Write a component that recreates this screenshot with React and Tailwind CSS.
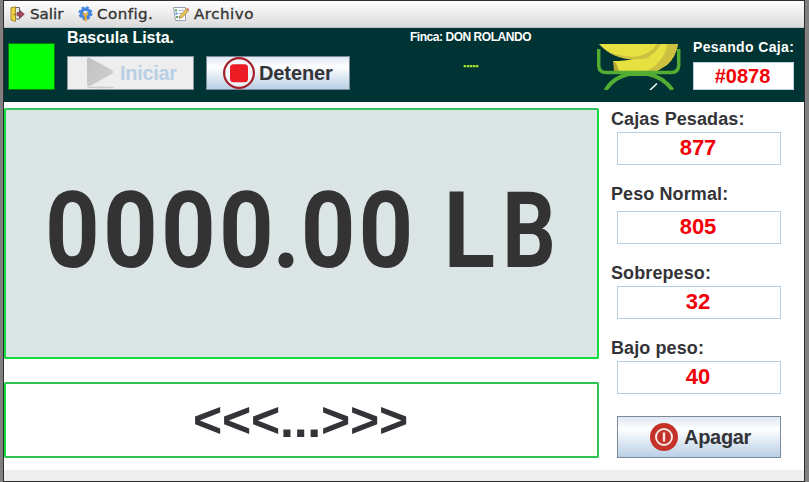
import React from 'react';

const fontSans = "font-['Liberation_Sans',Arial,sans-serif]";

function DoorIcon() {
  return (
    <svg width="16" height="18" viewBox="0 0 16 18" className="block shrink-0">
      <path d="M5 2.5H9.5V14H5z" fill="#e9e4e0" stroke="#666" />
      <path d="M1 2.5L5.5 1.8V16.5L1 15z" fill="#f0cf45" stroke="#94751b" strokeWidth=".8" />
      <circle cx="4.3" cy="9.5" r=".7" fill="#5d4814" />
      <path d="M7 7.6h3V5.4l4.3 3.8-4.3 3.8v-2.2H7z" fill="#a8485c" stroke="#682739" strokeWidth=".6" />
    </svg>
  );
}

function GearIcon() {
  return (
    <svg width="15" height="16" viewBox="0 0 15 16" className="block shrink-0">
      <circle cx="7.5" cy="7.3" r="4.2" fill="none" stroke="#4487e0" strokeWidth="3.2" />
      <circle cx="7.5" cy="7.3" r="6" fill="none" stroke="#4487e0" strokeWidth="2" strokeDasharray="2.7 2.01" />
      <circle cx="7.5" cy="7" r="2" fill="#e4edfa" />
      <path d="M5 6v2.3l1.5 1.5V15h2V9.8L10 8.3V6L8.6 7.5H6.4z" fill="#f0b43a" stroke="#c98c2a" strokeWidth=".4" />
    </svg>
  );
}

function NotesIcon() {
  return (
    <svg width="18" height="16" viewBox="0 0 18 16" className="block shrink-0">
      <path d="M1.5 1.5H13.5V14.5H3.5z" fill="#fbfdff" stroke="#97a3b1" />
      <path d="M6.5 4.5h5M6.5 7.5h4M6.5 10.5h3" stroke="#a9b5c4" />
      <path d="M3 3.2h2v2H3z" fill="#62a45d" />
      <path d="M3.4 6.5h2v2h-2z" fill="#458cd0" />
      <path d="M4 10h2v2H4z" fill="#5da365" />
      <path d="M7.2 12.5l1-3L14.5 2.8l2 2-6.2 6.6z" fill="#f2c84c" stroke="#8d7547" strokeWidth=".7" />
      <path d="M14.5 2.8l1-1 1.9 1.9-.9 1.1z" fill="#df6975" />
    </svg>
  );
}

function MenuItem({ icon, label, className }) {
  return (
    <div className={`flex items-center ${className}`}>
      {icon}
      <span className="ml-1 -mt-px origin-left scale-x-[1.08] text-[14px] leading-[18px] [-webkit-text-stroke:0.3px_#333]">{label}</span>
    </div>
  );
}

function Scale() {
  return (
    <svg width="85" height="46" viewBox="0 0 85 46" className="block shrink-0">
      <path d="M2 0H81Q79 13 70 21L60 27H20L16 17Q28 17 36 15Q15 14 2 0z" fill="#e6e040" />
      <path d="M2 0Q15 14 40 12.5Q54 10 60 0H64Q58 10 49 14.5L35 15.5Q14 14 2 0z" fill="#cdbf3f" />
      <path d="M70 0H81Q78 17 60 27H50Q69 16 70 0z" fill="#cdbf3f" />
      <path d="M16 17L17 27H22L19 19z" fill="#b5a832" />
      <path d="M1.7 5V21Q1.7 28.5 9 28.5H74Q81.7 28.5 81.7 21V5" fill="none" stroke="#52ad32" strokeWidth="3.5" />
      <path d="M8.5 46Q17 33 32 30H51Q66 33 75.5 46" fill="none" stroke="#52ad32" strokeWidth="4" />
      <path d="M53 46l7-6.5" stroke="#e8f5ec" strokeWidth="1.7" />
    </svg>
  );
}

function Stat({ label, value, className, boxClass = 'mt-[2px]' }) {
  return (
    <div className={className}>
      <div className="h-[22px] whitespace-nowrap pt-px text-[18px] leading-[21px] tracking-[0.1px]">{label}</div>
      <div className={`ml-1.5 h-[33px] w-[164px] border border-[#b8cfe0] pr-0.5 text-center text-[22px] leading-[30px] text-[#f20008] ${boxClass}`}>
        {value}
      </div>
    </div>
  );
}

export default function App() {
  return (
    <div className={`flex h-[482px] w-[809px] overflow-hidden bg-[#808080] px-[3px] pr-1 font-bold text-[#333338] ${fontSans}`}>
      <main className="flex h-full w-[802px] flex-col border border-[#302d2e] bg-white">
        <nav className="flex h-[26px] shrink-0 bg-gradient-to-b from-white to-[#dadada] pl-1.5 font-['DejaVu_Sans',sans-serif] font-normal text-[#333]">
          <MenuItem icon={<DoorIcon />} label="Salir" className="w-[67px]" />
          <MenuItem icon={<GearIcon />} label="Config." className="w-[94px] pl-px tracking-[0.4px]" />
          <MenuItem icon={<NotesIcon />} label="Archivo" className="pl-px tracking-[0.45px]" />
        </nav>

        <header className="flex h-[75px] shrink-0 border-t border-[#b5c4c8] bg-[#003333] text-white">
          <div className="ml-1 mt-[15px] h-[47px] w-[47px] border border-[#087b08] bg-[#00ff00]" />
          <div className="ml-3 w-[283px]">
            <div className="h-[28px] pt-px text-[16px] leading-[18px] tracking-[-0.05px]">Bascula Lista.</div>
            <div className="flex gap-3">
              <button className="flex h-[34px] w-[127px] items-center border border-[#8796a0] bg-[#eeeeee] pl-[18px] text-[20px] text-[#b8cfe5]">
                <svg width="30" height="32" viewBox="0 0 30 32" className="block shrink-0">
                  <defs>
                    <linearGradient id="play" x2="1" y2="1">
                      <stop stopColor="#c2c2c2" />
                      <stop offset="1" stopColor="#cfcfcf" />
                    </linearGradient>
                  </defs>
                  <ellipse cx="14.5" cy="30.4" rx="14" ry="1" fill="#cccccc" />
                  <path d="M1 2Q1 0 4 1L26 13Q28 15 26 17L4 29Q1 30 1 27z" fill="url(#play)" />
                </svg>
                <span className="ml-1 tracking-[-0.3px]">Iniciar</span>
              </button>
              <button className="flex h-[34px] w-[144px] items-center border border-[#7a8a99] bg-[linear-gradient(to_bottom,#dde8f3_0%,#ffffff_30%,#b8cfe5_100%)] pl-4 text-[20px] text-[#333338]">
                <svg width="32" height="32" viewBox="0 0 32 32" className="block shrink-0">
                  <circle cx="16" cy="16" r="14.9" fill="#f4f6fa" fillOpacity=".8" stroke="#a51f29" strokeWidth="2.2" />
                  <rect x="7" y="7.2" width="18" height="18" rx="3.5" fill="#ed1c24" />
                </svg>
                <span className="ml-1 tracking-[-0.1px]">Detener</span>
              </button>
            </div>
          </div>
          <div className="ml-[60px] w-[122px] whitespace-nowrap text-center">
            <div className="h-[25px] pt-px text-left text-[12px] leading-4 tracking-[-0.46px]">Finca: DON ROLANDO</div>
            <div className="h-5 text-[11px] leading-5 text-[#b7f52c] [-webkit-text-stroke:0.5px_#b7f52c]">.....</div>
          </div>
          <div className="ml-[65px] mt-4 w-[96px]">
            <Scale />
          </div>
          <div className="w-[101px]">
            <div className="mt-2.5 h-6 whitespace-nowrap text-[14px] leading-[18px] tracking-[0.37px]">Pesando Caja:</div>
            <div className="h-7 border border-[#b8cfe5] bg-white pr-0.5 text-center text-[20px] leading-[26px] text-[#f20008]">#0878</div>
          </div>
        </header>

        <div className="flex h-[368px] shrink-0">
          <section className="w-[595px] shrink-0">
            <div className="mt-1.5 h-[251px] rounded-[2px] border-2 border-[#12dc40] border-t-[#32c459] bg-[#dce5e6] pl-[39px] pt-[73px]">
              <div className="flex origin-left scale-x-[0.9] whitespace-pre font-['Roboto',sans-serif] text-[106px] leading-[96px] tracking-[3.6px] text-[#333]">
                <span>000<span className="tracking-[-1.4px]">0</span><span className="tracking-[0.6px]">.</span>00 L</span>
                <span className="ml-1 origin-left scale-x-[0.88]">B</span>
              </div>
            </div>
            <div className="mt-[23px] flex h-[76px] justify-center rounded-[2px] border-2 border-[#2dc455] border-l-[#12dc40] bg-white pr-0.5 text-[50px] leading-[72px] tracking-[-0.2px]">
              &lt;&lt;&lt;...&gt;&gt;&gt;
            </div>
          </section>

          <aside className="ml-3 w-[180px]">
            <Stat label="Cajas Pesadas:" value="877" className="mt-1.5 h-[75px]" />
            <Stat label="Peso Normal:" value="805" className="h-[79px]" boxClass="mt-[6px]" />
            <Stat label="Sobrepeso:" value="32" className="h-[75px]" />
            <Stat label="Bajo peso:" value="40" className="h-[79px]" />
            <button className="ml-1.5 flex h-[42px] w-[164px] items-center border border-[#7a8a99] bg-[linear-gradient(to_bottom,#dde8f3_0%,#ffffff_30%,#b8cfe5_100%)] pl-8 text-[20px]">
              <svg width="28" height="28" viewBox="0 0 28 28" className="block shrink-0">
                <circle cx="14" cy="14" r="14" fill="#c53229" />
                <circle cx="14" cy="14" r="8" fill="none" stroke="#f6e7e4" strokeWidth="2" />
                <path d="M14 9.5v9" stroke="#f6e7e4" strokeWidth="2.4" />
              </svg>
              <span className="ml-1.5 tracking-[-0.3px]">Apagar</span>
            </button>
          </aside>
        </div>
        <footer className="flex-1 bg-[#eeeeee]" />
      </main>
    </div>
  );
}
